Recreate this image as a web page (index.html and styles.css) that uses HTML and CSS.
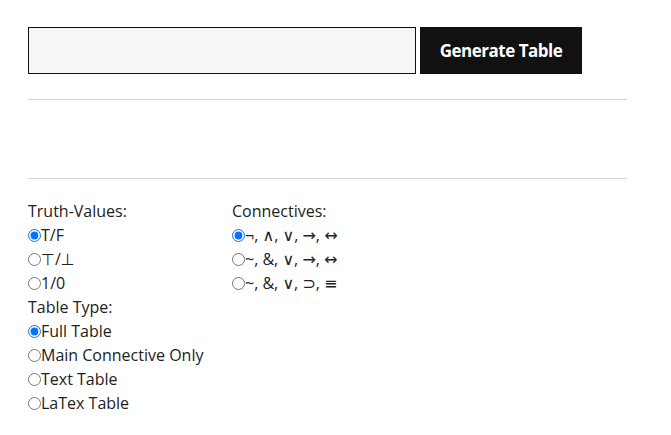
FILE: index.html
```html
<!DOCTYPE html>
<html>
<head>
<meta charset="utf-8">
<link rel="stylesheet" href="styles.css">
</head>
<body>
<div class="page">
  <form class="entry">
    <input class="formula" type="text">
    <button class="generate" type="button">Generate Table</button>
  </form>
  <hr class="rule">
  <div class="output"></div>
  <hr class="rule">
  <div class="options">
    <div class="col">
      <div class="label">Truth-Values:</div>
      <label class="opt"><input type="radio" name="tv" checked>T/F</label>
      <label class="opt"><input type="radio" name="tv">⊤/⊥</label>
      <label class="opt"><input type="radio" name="tv">1/0</label>
      <div class="label">Table Type:</div>
      <label class="opt"><input type="radio" name="tt" checked>Full Table</label>
      <label class="opt"><input type="radio" name="tt">Main Connective Only</label>
      <label class="opt"><input type="radio" name="tt">Text Table</label>
      <label class="opt"><input type="radio" name="tt">LaTex Table</label>
    </div>
    <div class="col">
      <div class="label">Connectives:</div>
      <label class="opt"><input type="radio" name="cn" checked>¬, ∧, ∨, →, ↔</label>
      <label class="opt"><input type="radio" name="cn">~, &amp;, ∨, →, ↔</label>
      <label class="opt"><input type="radio" name="cn">~, &amp;, ∨, ⊃, ≡</label>
    </div>
  </div>
</div>
</body>
</html>
```
FILE: styles.css
```css
html, body {
  margin: 0;
  padding: 0;
  background: #fff;
}
body {
  font-family: "Open Sans", "DejaVu Sans", sans-serif;
  font-size: 16px;
  color: #222;
}
.page {
  width: 599px;
  padding: 27px 0 0 28px;
}
.entry {
  display: flex;
  gap: 4px;
  margin: 0;
}
.formula {
  width: 388px;
  height: 47px;
  box-sizing: border-box;
  border: 1px solid #111;
  background: #f6f6f6;
  margin: 0;
  padding: 0 8px;
  font: inherit;
}
.generate {
  width: 162px;
  height: 47px;
  border: none;
  background: #111;
  color: #fff;
  font-family: "Open Sans", sans-serif;
  font-weight: 700;
  font-size: 17px;
  letter-spacing: -0.5px;
  margin: 0;
  padding: 0;
}
.rule {
  border: none;
  border-top: 1px solid #d6d6d6;
  margin: 0;
}
.entry + .rule {
  margin-top: 25px;
}
.output {
  height: 78px;
}
.options {
  display: flex;
  padding-top: 20px;
}
.col {
  display: flex;
  flex-direction: column;
}
.col:first-child {
  width: 204px;
}
.label, .opt {
  line-height: 24px;
  height: 24px;
}
.opt {
  display: flex;
  align-items: center;
}
.opt input {
  margin: 0;
  width: 13px;
  height: 13px;
}
```
